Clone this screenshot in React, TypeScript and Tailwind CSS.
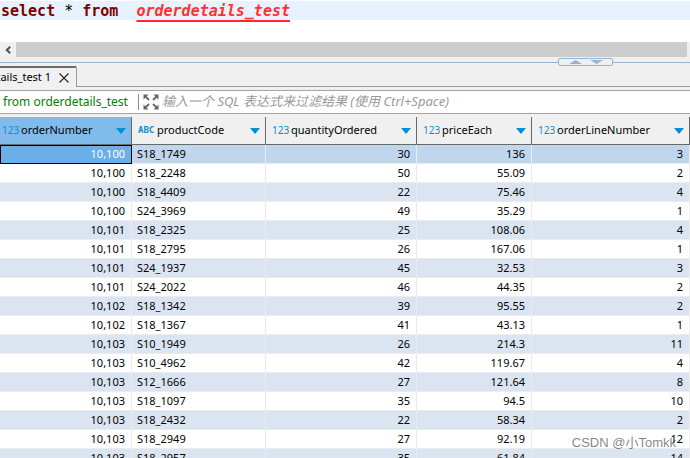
import React from 'react';

type Column = {
  name: string;
  kind: 'number' | 'text';
};

const columns: Column[] = [
  { name: 'orderNumber', kind: 'number' },
  { name: 'productCode', kind: 'text' },
  { name: 'quantityOrdered', kind: 'number' },
  { name: 'priceEach', kind: 'number' },
  { name: 'orderLineNumber', kind: 'number' },
];

const rows = [
  ['10,100', 'S18_1749', '30', '136', '3'],
  ['10,100', 'S18_2248', '50', '55.09', '2'],
  ['10,100', 'S18_4409', '22', '75.46', '4'],
  ['10,100', 'S24_3969', '49', '35.29', '1'],
  ['10,101', 'S18_2325', '25', '108.06', '4'],
  ['10,101', 'S18_2795', '26', '167.06', '1'],
  ['10,101', 'S24_1937', '45', '32.53', '3'],
  ['10,101', 'S24_2022', '46', '44.35', '2'],
  ['10,102', 'S18_1342', '39', '95.55', '2'],
  ['10,102', 'S18_1367', '41', '43.13', '1'],
  ['10,103', 'S10_1949', '26', '214.3', '11'],
  ['10,103', 'S10_4962', '42', '119.67', '4'],
  ['10,103', 'S12_1666', '27', '121.64', '8'],
  ['10,103', 'S18_1097', '35', '94.5', '10'],
  ['10,103', 'S18_2432', '22', '58.34', '2'],
  ['10,103', 'S18_2949', '27', '92.19', '12'],
  ['10,103', 'S18_2957', '35', '61.84', '14'],
];

const Editor: React.FC = () => (
  <section className="shrink-0 bg-white pt-px">
    <pre className="h-[19px] bg-[#e8f2fe] pl-px font-['DejaVu_Sans_Mono','Liberation_Mono',monospace] text-[15px] leading-5 font-bold text-[#7f0000]">
      select <span className="font-normal text-black">*</span> from{'  '}
      <span className="text-[#ff3030] italic underline decoration-[#ff2a2a] decoration-2 underline-offset-4 [text-decoration-skip-ink:none]">
        orderdetails_test
      </span>
    </pre>
    <div className="mt-[22px] flex h-[15px] bg-[#f0f0f0] pr-[3px]">
      <button aria-label="Scroll left" className="flex w-4 items-center justify-center">
        <svg viewBox="0 0 6 8" className="h-2 w-1.5" fill="none" stroke="#505050" strokeWidth="2">
          <path d="M5.2 .7 1.8 4l3.4 3.3" />
        </svg>
      </button>
      <div className="flex-1 bg-[#cdcdcd]" />
    </div>
  </section>
);

const Sash: React.FC = () => (
  <div className="relative h-1.5 shrink-0 border-b border-[#99b4d1]">
    <div className="absolute top-px right-[77px] flex h-2 w-[55px] items-center justify-center gap-2 rounded-xs border border-[#99b4d1] bg-[#f0f0f0]">
      <button aria-label="Collapse editor">
        <svg viewBox="0 0 13 4" className="h-1 w-[13px]" fill="#99b4d1">
          <path d="M0 4 6.5 0 13 4z" />
        </svg>
      </button>
      <button aria-label="Collapse results">
        <svg viewBox="0 0 13 4" className="h-1 w-[13px]" fill="#99b4d1">
          <path d="M0 0h13L6.5 4z" />
        </svg>
      </button>
    </div>
  </div>
);

const ResultTabs: React.FC = () => (
  <div className="flex h-6 shrink-0 items-end pt-[3px]">
    <div className="flex h-full w-[77px] items-center justify-end gap-2 overflow-hidden rounded-tr-xs border-t-2 border-r border-t-[#6d6d6d] border-r-[#9a9a9a] pr-[7px] text-[11px]">
      <span className="whitespace-nowrap">tails_test 1</span>
      <button aria-label="Close tab">
        <svg viewBox="0 0 10 10" className="size-2.5" stroke="#222" strokeWidth="1.1">
          <path d="M.5.5l9 9M9.5.5l-9 9" />
        </svg>
      </button>
    </div>
    <div className="h-px flex-1 bg-[#9a9a9a]" />
  </div>
);

const FilterBar: React.FC = () => (
  <div className="mt-[3px] flex h-6 shrink-0 items-center border-y border-[#a5a5a5] bg-white pl-[3px]">
    <span className="w-[135px] text-xs whitespace-nowrap text-[#008000]">from orderdetails_test</span>
    <button aria-label="Expand filter panel" className="flex h-4 items-center border-l border-[#8c8c8c] pr-[3px] pl-1">
      <svg viewBox="0 0 16 16" className="size-4" fill="#666" stroke="#666" strokeWidth="1.8">
        <path d="M2 2l4 4M14 2l-4 4M2 14l4-4M14 14l-4-4" />
        <path stroke="none" d="M.5.5h5l-5 5zM15.500.5v5l-5-5zM.5 15.500v-5l5 5zM15.500 15.500h-5l5-5z" />
      </svg>
    </button>
    <input
      aria-label="Result filter"
      placeholder="输入一个 SQL 表达式来过滤结果 (使用 Ctrl+Space)"
      className="min-w-0 flex-1 text-[13px] italic outline-none placeholder:text-[#999]"
    />
  </div>
);

const HeaderCell: React.FC<{ column: Column; active: boolean }> = ({ column, active }) => (
  <th
    className={`border-r border-b border-[#696969] p-0 font-normal ${active ? 'bg-[#80bbeb]' : 'bg-[#f0f0f0]'}`}
  >
    <div className={`flex h-[27px] items-center pr-[5px] ${active ? 'pl-0.5' : 'pl-1.5'}`}>
      {column.kind === 'number' ? (
        <span className="w-[19px] text-left text-[10px] text-[#0a8fd0]">123</span>
      ) : (
        <span className="w-[19px] text-left font-['DejaVu_Sans_Mono',monospace] text-[9px] font-bold text-[#0a8fd0]">
          ABC
        </span>
      )}
      <span className="flex-1 text-left text-[11px]">{column.name}</span>
      <button aria-label={`Sort by ${column.name}`}>
        <svg viewBox="0 0 10 6" className="h-1.5 w-2.5" fill="#0090d7">
          <path d="M0 0h10L5 6z" />
        </svg>
      </button>
    </div>
  </th>
);

const ResultGrid: React.FC = () => (
  <div className="mt-[3px] min-h-0 flex-1 overflow-hidden bg-white">
    <table className="w-full table-fixed border-separate border-spacing-0">
      <colgroup>
        <col className="w-[132px]" />
        <col className="w-[134px]" />
        <col className="w-[151px]" />
        <col className="w-[115px]" />
        <col />
      </colgroup>
      <thead>
        <tr>
          {columns.map((column, i) => (
            <HeaderCell key={column.name} column={column} active={i === 0} />
          ))}
        </tr>
      </thead>
      <tbody className="text-[11px]">
        {rows.map((row, r) => (
          <tr key={row[1]} className={r === 0 ? 'bg-[#bfd6ec]' : r % 2 === 0 ? 'bg-[#dbe5f1]' : 'bg-white'}>
            {row.map((value, c) => (
              <td
                key={columns[c].name}
                className={`h-[19px] border-r border-b border-[#ececec] py-0 leading-[18px] ${
                  columns[c].kind === 'text' ? 'pl-[5px] text-left' : 'pr-1.5 text-right'
                } ${r === 0 && c === 0 ? 'bg-[#6caee6] text-white outline outline-black -outline-offset-1' : ''}`}
              >
                {value}
              </td>
            ))}
          </tr>
        ))}
      </tbody>
    </table>
  </div>
);

export default function App() {
  return (
    <main className="relative flex h-screen flex-col overflow-hidden bg-[#f0f0f0] font-['Noto_Sans','Noto_Sans_CJK_SC',sans-serif] text-black">
      <Editor />
      <Sash />
      <ResultTabs />
      <FilterBar />
      <ResultGrid />
      <span className="absolute right-[14px] bottom-1.5 font-['Liberation_Sans','Noto_Sans_CJK_SC',sans-serif] text-[13px] text-black/50">
        CSDN @小Tomkk
      </span>
    </main>
  );
}
